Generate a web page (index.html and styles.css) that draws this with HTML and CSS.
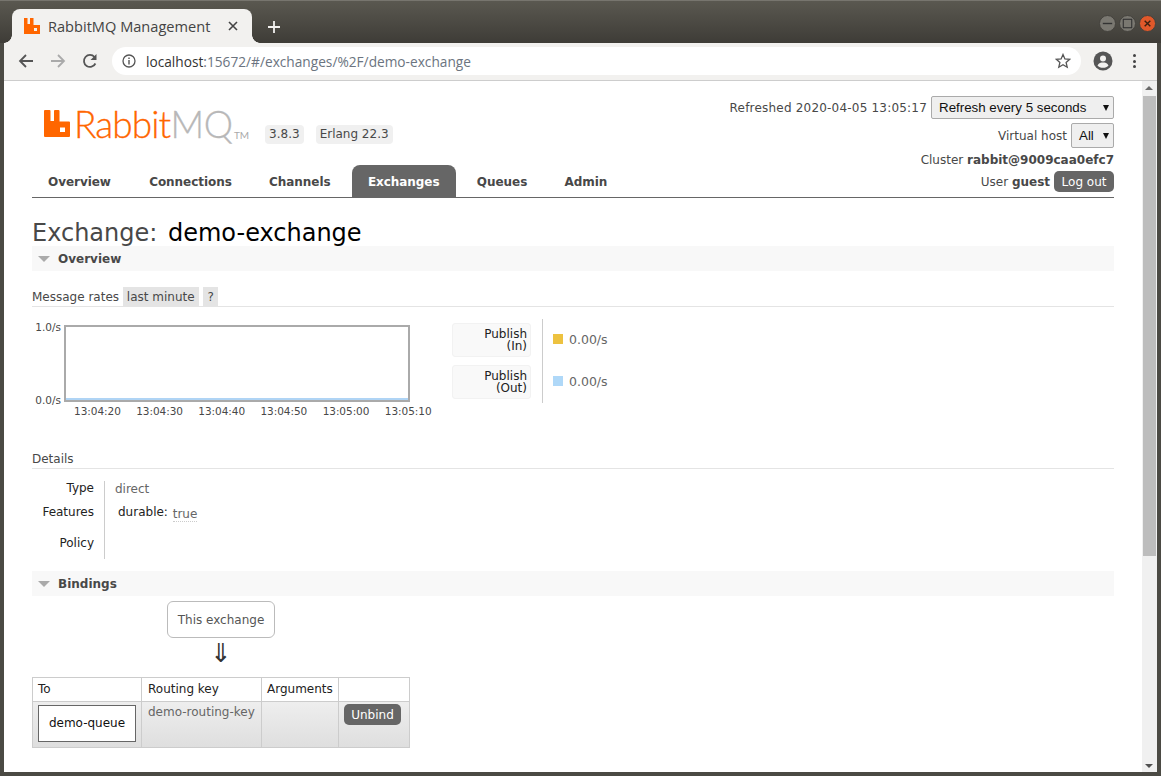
FILE: index.html
```html
<!DOCTYPE html>
<html lang="en">
<head>
    <meta charset="UTF-8">
    <meta name="viewport" content="width=device-width, initial-scale=1.0">
    <title>RabbitMQ Management</title>
    <link rel="stylesheet" href="styles.css">
</head>
<body>
<div class="window">
    <div class="titlebar">
        <div class="tab">
            <svg class="tab-icon" viewBox="0 0 16 16"><path fill="#ff6600" fill-rule="evenodd" d="M0 0h3.500v6h2.500V0h3.500v7h6.500v9H0zM10 10v3h3v-3z"/></svg>
            <span class="tab-title">RabbitMQ Management</span>
            <svg class="tab-close" viewBox="0 0 10 10"><path d="M1 1l8 8M9 1l-8 8" stroke="#444" stroke-width="1.6" fill="none"/></svg>
        </div>
        <svg class="new-tab" viewBox="0 0 12 12"><path d="M6 0v12M0 6h12" stroke="#f1f0ee" stroke-width="1.8" fill="none"/></svg>
        <div class="win-buttons">
            <span class="win-btn"><svg viewBox="0 0 16 16"><path d="M3 8h10" stroke="#333" stroke-width="1.5"/></svg></span>
            <span class="win-btn"><svg viewBox="0 0 16 16"><rect x="3.500" y="3.500" width="9" height="9" fill="none" stroke="#333" stroke-width="1.2"/></svg></span>
            <span class="win-btn close"><svg viewBox="0 0 16 16"><path d="M5 5l6 6M11 5l-6 6" stroke="#3a2010" stroke-width="1.5"/></svg></span>
        </div>
    </div>

    <div class="toolbar">
        <svg class="tool-icon" viewBox="0 0 16 16"><path d="M15 8H2M8 2L2 8l6 6" stroke="#555" stroke-width="1.8" fill="none"/></svg>
        <svg class="tool-icon" viewBox="0 0 16 16"><path d="M1 8h13M8 2l6 6-6 6" stroke="#aaa" stroke-width="1.8" fill="none"/></svg>
        <svg class="tool-icon" viewBox="0 0 16 16"><path d="M13.400 10.500A6 6 0 1 1 12.500 4" stroke="#555" stroke-width="1.8" fill="none"/><path d="M14.500 1v6h-6z" fill="#555"/></svg>
        <div class="omnibox">
            <svg class="info-icon" viewBox="0 0 14 14"><circle cx="7" cy="7" r="6" stroke="#555" stroke-width="1.3" fill="none"/><path d="M7 6v4.500M7 3.500v1.500" stroke="#555" stroke-width="1.4"/></svg>
            <span class="url"><span class="url-host">localhost</span>:15672/#/exchanges/%2F/demo-exchange</span>
            <svg class="star-icon" viewBox="0 0 16 16"><path d="M8 1.500l1.900 4.400 4.800.4-3.600 3.200 1.100 4.700L8 11.700l-4.200 2.500 1.100-4.700-3.600-3.200 4.800-.4z" stroke="#555" stroke-width="1.3" fill="none"/></svg>
        </div>
        <svg class="account-icon" viewBox="0 0 20 20"><circle cx="10" cy="10" r="9.500" fill="#555"/><circle cx="10" cy="7.500" r="3" fill="#f2f1ef"/><path d="M4.500 14.500c1-2.500 3.500-3 5.500-3s4.500.5 5.500 3c-1.200 1.400-3.300 2.300-5.500 2.300s-4.300-.9-5.500-2.300z" fill="#f2f1ef"/></svg>
        <div class="menu-dots"><i></i><i></i><i></i></div>
    </div>

    <div class="viewport">
        <div class="page">
            <div class="header">
                <div class="header-left">
                    <div class="brand">
                        <svg class="logo-icon" viewBox="0 0 26 27"><path fill="#ff6600" fill-rule="evenodd" d="M1 0h4.500a1 1 0 0 1 1 1v10h3.500V1a1 1 0 0 1 1-1h3.500a1 1 0 0 1 1 1v10.500h9.500a1 1 0 0 1 1 1V26a1 1 0 0 1-1 1H1a1 1 0 0 1-1-1V1a1 1 0 0 1 1-1zM16 17.500V22h5v-4.500z"/></svg>
                        <span class="logo-text"><span class="logo-rabbit">Rabbit</span><span class="logo-mq">MQ</span></span>
                        <span class="logo-tm">TM</span>
                        <span class="badge first">3.8.3</span>
                        <span class="badge">Erlang 22.3</span>
                    </div>
                    <ul class="nav">
                        <li>Overview</li>
                        <li>Connections</li>
                        <li>Channels</li>
                        <li class="active">Exchanges</li>
                        <li>Queues</li>
                        <li>Admin</li>
                    </ul>
                </div>
                <div class="header-right">
                    <div class="status-row refresh-row"><span class="digits">Refreshed 2020-04-05 13:05:17</span> <span class="select wide">Refresh every 5 seconds<i class="select-arrow"></i></span></div>
                    <div class="status-row vhost-row">Virtual host <span class="select small">All<i class="select-arrow"></i></span></div>
                    <div class="status-row cluster-row"><span>Cluster <b>rabbit@9009caa0efc7</b></span></div>
                    <div class="status-row user-row"><span>User <b>guest</b></span> <span class="btn">Log out</span></div>
                </div>
            </div>

            <h1>Exchange: <span class="h1-name">demo-exchange</span></h1>

            <div class="section-bar"><i class="tri"></i>Overview</div>

            <div class="sub-head rates-head">Message rates <span class="tag">last minute</span> <span class="tag">?</span></div>
            <div class="rates">
                <div class="chart-wrap">
                    <div class="chart-row">
                        <div class="y-axis"><span>1.0/s</span><span>0.0/s</span></div>
                        <div class="plot"><div class="plot-line"></div></div>
                    </div>
                    <div class="x-axis">
                        <span>13:04:20</span><span>13:04:30</span><span>13:04:40</span><span>13:04:50</span><span>13:05:00</span><span>13:05:10</span>
                    </div>
                </div>
                <div class="legend">
                    <div class="legend-labels">
                        <div class="legend-label">Publish<br>(In)</div>
                        <div class="legend-label">Publish<br>(Out)</div>
                    </div>
                    <div class="legend-values">
                        <div class="legend-value"><i class="swatch yellow"></i>0.00/s</div>
                        <div class="legend-value"><i class="swatch blue"></i>0.00/s</div>
                    </div>
                </div>
            </div>

            <div class="sub-head details-head">Details</div>
            <div class="details">
                <div class="details-keys">
                    <div class="key k-type">Type</div>
                    <div class="key k-features">Features</div>
                    <div class="key k-policy">Policy</div>
                </div>
                <div class="details-vals">
                    <div class="val">direct</div>
                    <div class="val-features"><span class="feat-key">durable:</span> <abbr class="feat-val">true</abbr></div>
                </div>
            </div>

            <div class="section-bar bindings-bar"><i class="tri"></i>Bindings</div>

            <div class="this-exchange">This exchange</div>
            <div class="down-arrow">⇓</div>

            <table class="bindings">
                <tr>
                    <th class="col-to">To</th>
                    <th class="col-key">Routing key</th>
                    <th class="col-args">Arguments</th>
                    <th class="col-act"></th>
                </tr>
                <tr class="row">
                    <td><span class="queue-box">demo-queue</span></td>
                    <td>demo-routing-key</td>
                    <td></td>
                    <td><span class="btn unbind">Unbind</span></td>
                </tr>
            </table>
        </div>
        <div class="scrollbar">
            <i class="arrow-up"></i>
            <div class="thumb"></div>
            <i class="arrow-down"></i>
        </div>
    </div>
</div>
</body>
</html>
```

FILE: styles.css
```css
* {
    box-sizing: border-box;
}
html, body {
    margin: 0;
    height: 100%;
    overflow: hidden;
}
body {
    background-color: #4b4a44;
    font-family: "DejaVu Sans", Verdana, sans-serif;
    font-size: 12px;
    color: #484848;
}
.window {
    width: 1161px;
    height: 776px;
    padding: 0 4px 4px 4px;
    display: flex;
    flex-direction: column;
    background-color: #4b4a44;
}

/* browser chrome */
.titlebar {
    height: 43px;
    margin: 0 -4px;
    padding: 8px 5px 0 12px;
    display: flex;
    align-items: flex-start;
    background: linear-gradient(#5a5850, #3e3c37);
    border-top: 1px solid #77756e;
    flex-shrink: 0;
}
.tab {
    width: 240px;
    height: 34px;
    padding: 0 12px;
    display: flex;
    align-items: center;
    position: relative;
    background-color: #f2f1ef;
    border-radius: 8px 8px 0 0;
    font-family: "Open Sans", sans-serif;
    font-size: 14.6px;
    color: #444;
}
.tab::before, .tab::after {
    content: "";
    position: absolute;
    bottom: 0;
    width: 8px;
    height: 8px;
}
.tab::before {
    left: -8px;
    background: radial-gradient(circle at 0 0, transparent 7.5px, #f2f1ef 8px);
}
.tab::after {
    right: -8px;
    background: radial-gradient(circle at 100% 0, transparent 7.5px, #f2f1ef 8px);
}
.tab-icon {
    width: 16px;
    height: 16px;
    margin-right: 8px;
    flex-shrink: 0;
}
.tab-title {
    flex: 1;
    white-space: nowrap;
}
.tab-close {
    width: 10px;
    height: 10px;
    margin-right: 2px;
    flex-shrink: 0;
}
.new-tab {
    width: 12px;
    height: 12px;
    margin: 12px 0 0 16px;
}
.win-buttons {
    margin-left: auto;
    margin-top: 6px;
    display: flex;
    gap: 3px;
}
.win-btn {
    width: 17px;
    height: 17px;
    border-radius: 50%;
    background-color: #7a7871;
    border: 1px solid #44423d;
    display: flex;
}
.win-btn.close {
    background-color: #e0582a;
}
.toolbar {
    height: 38px;
    padding: 4px 0 0 14px;
    display: flex;
    align-items: flex-start;
    background-color: #f2f1ef;
    border-bottom: 1px solid #cdcdcd;
    flex-shrink: 0;
}
.tool-icon {
    width: 16px;
    height: 16px;
    margin: 6px 16px 0 0;
}
.omnibox {
    width: 969px;
    height: 28px;
    margin-left: -2px;
    padding: 0 10px;
    display: flex;
    align-items: center;
    background-color: #fff;
    border-radius: 14px;
    font-family: "Open Sans", sans-serif;
    font-size: 13.7px;
    color: #6b7480;
}
.info-icon {
    width: 14px;
    height: 14px;
    margin-right: 10px;
}
.url {
    flex: 1;
}
.url-host {
    color: #333;
}
.star-icon {
    width: 16px;
    height: 16px;
}
.account-icon {
    width: 20px;
    height: 20px;
    margin: 4px 0 0 12px;
}
.menu-dots {
    margin: 7px 0 0 20px;
    display: flex;
    flex-direction: column;
    gap: 2.5px;
}
.menu-dots i {
    width: 3px;
    height: 3px;
    background-color: #444;
    border-radius: 50%;
}

/* page */
.viewport {
    flex: 1;
    min-height: 0;
    display: flex;
    background-color: #fff;
}
.page {
    flex: 1;
    padding: 0 28px;
    overflow: hidden;
}
.scrollbar {
    width: 15px;
    padding-top: 15px;
    display: flex;
    flex-direction: column;
    align-items: center;
    background-color: #f0f0f0;
    position: relative;
}
.thumb {
    width: 13px;
    height: 460px;
    background-color: #bdbdbd;
}
.arrow-up, .arrow-down {
    position: absolute;
    left: 3px;
    width: 0;
    height: 0;
    border-left: 4px solid transparent;
    border-right: 4px solid transparent;
}
.arrow-up {
    top: 5px;
    border-bottom: 4px solid #6a6a6a;
}
.arrow-down {
    bottom: 4px;
    border-top: 4px solid #505050;
}

/* header */
.header {
    height: 117px;
    display: flex;
    justify-content: space-between;
    border-bottom: 1px solid #666;
}
.header-left {
    display: flex;
    flex-direction: column;
    justify-content: space-between;
}
.brand {
    margin-top: 29px;
    padding-left: 12px;
    display: flex;
    align-items: flex-start;
}
.logo-icon {
    width: 26px;
    height: 27px;
    flex-shrink: 0;
}
.logo-text {
    margin: -9px 0 0 4px;
    font-family: Lato, sans-serif;
    font-weight: 300;
    font-size: 37px;
    line-height: 46px;
    white-space: nowrap;
    -webkit-text-stroke: 0.3px;
}
.logo-rabbit {
    color: #ff6600;
    letter-spacing: -0.9px;
}
.logo-mq {
    color: #b8b8b8;
    letter-spacing: -0.2px;
}
.logo-tm {
    margin: 19px 0 0 1px;
    font-family: Lato, sans-serif;
    font-size: 10px;
    color: #aaa;
}
.badge {
    margin: 15px 0 0 12px;
    padding: 2px 4px;
    height: 19px;
    background-color: #f0f0f0;
    border-radius: 4px;
    white-space: nowrap;
    line-height: 15px;
}
.badge.first {
    margin-left: 16px;
}
.nav {
    margin: 0;
    padding: 0;
    list-style: none;
    display: flex;
    gap: 5.3px;
    letter-spacing: -0.05px;
}
.nav li {
    height: 32px;
    padding: 0 16px;
    border-radius: 8px 8px 0 0;
    font-weight: bold;
    line-height: 34px;
}
.nav li:first-child {
    padding-right: 17px;
}
.nav li.active {
    background-color: #666;
    color: #fff;
}
.header-right {
    padding-top: 15px;
    display: flex;
    flex-direction: column;
    align-items: flex-end;
    white-space: nowrap;
}
.status-row {
    display: flex;
    align-items: center;
    gap: 4px;
}
.digits {
    letter-spacing: 0.2px;
}
.refresh-row {
    height: 23px;
}
.vhost-row {
    height: 25px;
    margin-top: 4px;
}
.cluster-row {
    height: 16px;
    margin-top: 4px;
}
.user-row {
    height: 21px;
    margin-top: 3px;
}
.select {
    height: 100%;
    padding: 0 4px 0 7px;
    display: flex;
    align-items: center;
    background-color: #efefef;
    border: 1px solid #aaa;
    border-radius: 2px;
    font-family: "Liberation Sans", Arial, sans-serif;
    font-size: 13.33px;
    color: #111;
}
.select.wide {
    width: 183px;
}
.select.small {
    width: 43px;
}
.select-arrow {
    width: 0;
    height: 0;
    margin-left: auto;
    border-left: 3.5px solid transparent;
    border-right: 3.5px solid transparent;
    border-top: 6px solid #111;
}
.btn {
    padding: 0 7.5px;
    height: 21px;
    line-height: 22px;
    background-color: #666;
    border-radius: 5px;
    color: #fff;
}

h1 {
    margin: 23px 0 0;
    font-weight: normal;
    font-size: 24px;
    line-height: 25px;
    color: #484848;
}
.h1-name {
    margin-left: 3px;
    color: #000;
}

.section-bar {
    height: 25px;
    padding-left: 6px;
    display: flex;
    align-items: center;
    background-color: #f8f8f8;
    font-weight: bold;
}
.tri {
    width: 0;
    height: 0;
    margin-right: 8px;
    border-left: 6px solid transparent;
    border-right: 6px solid transparent;
    border-top: 6px solid #aaa;
}
.sub-head {
    height: 20px;
    border-bottom: 1px solid #e4e4e4;
    line-height: 21px;
}
.rates-head {
    margin-top: 16px;
}
.tag {
    display: inline-block;
    padding: 1px 4px 0;
    line-height: 18px;
    background-color: #e4e4e4;
}
.rates-head .tag:last-child {
    margin-left: 1px;
}

/* chart */
.rates {
    height: 102px;
    margin-top: 12px;
    display: flex;
    align-items: flex-start;
}
.chart-wrap {
    width: 400px;
    margin-top: 6px;
    font-size: 10.5px;
}
.chart-row {
    display: flex;
}
.y-axis {
    width: 32px;
    height: 87px;
    margin: -5px 0 -5px 0;
    padding-right: 3px;
    display: flex;
    flex-direction: column;
    justify-content: space-between;
    align-items: flex-end;
    line-height: 14px;
}
.plot {
    width: 346px;
    height: 77px;
    display: flex;
    align-items: flex-end;
    border: 2px solid #aaa;
    background-color: #fff;
}
.plot-line {
    width: 100%;
    height: 2px;
    background-color: #afd4f5;
}
.x-axis {
    margin: 2px 0 0 42px;
    display: flex;
    gap: 15.4px;
    line-height: 14px;
    white-space: nowrap;
    letter-spacing: -0.05px;
}
.legend {
    margin-left: 20px;
    display: flex;
}
.legend-labels {
    width: 91px;
    height: 84px;
    padding: 4px 11px 0 0;
    display: flex;
    flex-direction: column;
    gap: 8px;
    border-right: 1px solid #ccc;
}
.legend-label {
    height: 34px;
    padding: 4px 3px 0 0;
    background-color: #f9f9f9;
    border: 1px solid #f2f2f2;
    border-radius: 3px;
    text-align: right;
    color: #222;
    line-height: 12px;
}
.legend-values {
    padding: 3px 0 0 10px;
    display: flex;
    flex-direction: column;
    gap: 8px;
}
.legend-value {
    height: 34px;
    display: flex;
    align-items: center;
    gap: 6px;
    font-size: 12.5px;
    color: #666;
}
.swatch {
    width: 10px;
    height: 10px;
}
.swatch.yellow {
    background-color: #edc240;
}
.swatch.blue {
    background-color: #afd8f8;
}

/* details */
.details-head {
    margin-top: 28px;
}
.details {
    margin-top: 12px;
    height: 78px;
    display: flex;
}
.details-keys {
    width: 73px;
    padding-right: 10px;
    border-right: 1px solid #ccc;
    text-align: right;
    color: #222;
}
.key {
    line-height: 14px;
}
.k-features {
    margin-top: 10px;
}
.k-policy {
    margin-top: 17px;
}
.details-vals {
    padding-left: 10px;
    color: #666;
}
.val {
    margin-top: 1px;
    line-height: 14px;
}
.val-features {
    margin: 9px 0 0 3px;
    line-height: 14px;
}
.feat-key {
    color: #222;
}
.feat-val {
    display: inline-block;
    margin-left: 1px;
    position: relative;
    top: 2px;
    border-bottom: 1px dotted #ccc;
}
.bindings-bar {
    margin-top: 12px;
}

/* bindings */
.this-exchange {
    width: 108px;
    height: 37px;
    margin: 5px 0 0 135px;
    border: 1px solid #bbb;
    border-radius: 6px;
    text-align: center;
    line-height: 37px;
    color: #555;
}
.down-arrow {
    width: 108px;
    height: 29px;
    margin: 2px 0 0 135px;
    text-align: center;
    font-size: 26px;
    line-height: 26px;
    color: #333;
}
.bindings {
    width: 378px;
    margin-top: 8px;
    border-collapse: collapse;
    table-layout: fixed;
}
.bindings th, .bindings td {
    border: 1px solid #ccc;
    text-align: left;
    vertical-align: top;
    font-weight: normal;
    padding: 0 5px;
}
.bindings th:nth-child(2), .bindings td:nth-child(2) {
    padding-left: 6px;
}
.bindings th {
    height: 23px;
    line-height: 23px;
    color: #222;
}
.bindings td {
    height: 46px;
    line-height: 20px;
    color: #666;
}
.col-to {
    width: 109px;
}
.col-key {
    width: 120px;
}
.col-args {
    width: 77px;
}
.row {
    background: linear-gradient(#eeeeee, #dedede);
}
.queue-box {
    display: block;
    height: 37px;
    width: 98px;
    margin-top: 3px;
    border: 1px solid #666;
    background-color: #fff;
    text-align: center;
    line-height: 35px;
    color: #111;
}
.btn.unbind {
    display: block;
    height: 21px;
    width: 57px;
    padding: 0;
    margin-top: 2px;
    text-align: center;
    color: #fff;
}
```
